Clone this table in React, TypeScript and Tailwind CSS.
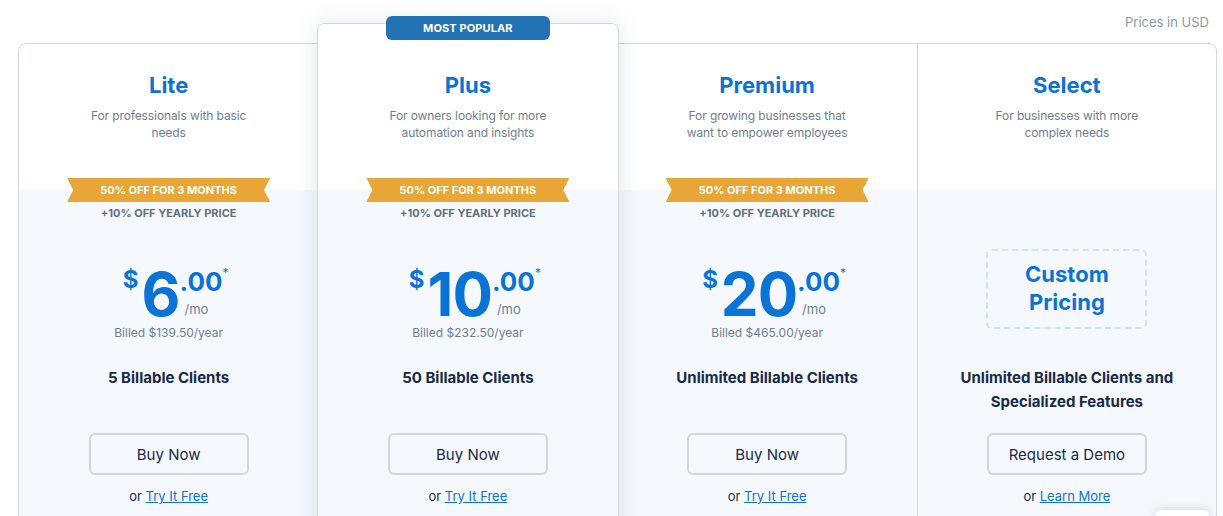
import React from "react";

type Plan = {
  name: string;
  desc: string[];
  price?: string;
  billed?: string;
  feature: string[];
  cta: string;
  link: string;
  featured?: boolean;
};

const plans: Plan[] = [
  {
    name: "Lite",
    desc: ["For professionals with basic", "needs"],
    price: "6",
    billed: "Billed $139.50/year",
    feature: ["5 Billable Clients"],
    cta: "Buy Now",
    link: "Try It Free",
  },
  {
    name: "Plus",
    desc: ["For owners looking for more", "automation and insights"],
    price: "10",
    billed: "Billed $232.50/year",
    feature: ["50 Billable Clients"],
    cta: "Buy Now",
    link: "Try It Free",
    featured: true,
  },
  {
    name: "Premium",
    desc: ["For growing businesses that", "want to empower employees"],
    price: "20",
    billed: "Billed $465.00/year",
    feature: ["Unlimited Billable Clients"],
    cta: "Buy Now",
    link: "Try It Free",
  },
  {
    name: "Select",
    desc: ["For businesses with more", "complex needs"],
    feature: ["Unlimited Billable Clients and", "Specialized Features"],
    cta: "Request a Demo",
    link: "Learn More",
  },
];

function Column({ plan, index }: { plan: Plan; index: number }) {
  const wrap = plan.featured
    ? "relative z-10 -mt-[21px] -mx-px bg-white border border-[#d3d8de] rounded-t-lg shadow-[0_0_24px_rgba(40,60,90,0.13)]"
    : index === 3
    ? "border-l border-[#d3d8de] rounded-tr-lg"
    : "rounded-tl-lg";
  return (
    <div className={wrap}>
      {plan.featured && (
        <div className="absolute -top-2 left-1/2 -translate-x-1/2 w-[164px] h-6 rounded-md bg-[#2372b4] flex items-center justify-center text-white text-[11px] font-bold tracking-[0.1px]">
          MOST POPULAR
        </div>
      )}
      <div
        className={
          "flex flex-col items-center bg-white " +
          (plan.featured ? "h-[166px] pt-[47px] rounded-t-lg" : "h-[146px] pt-[27px] rounded-t-lg")
        }
      >
        <div className="text-[22px] leading-[28px] font-bold text-[#0b73d5]">{plan.name}</div>
        <div className="mt-[8px] text-[12px] leading-[17px] tracking-[-0.1px] text-[#6e7e90] text-center">
          {plan.desc.map((d) => (
            <div key={d}>{d}</div>
          ))}
        </div>
      </div>
      <div className="bg-[#f5f9fd] flex flex-col items-center pb-12">
        {plan.price ? (
          <>
            <div className="-mt-3 w-[203px] h-6 bg-[#e8a636] [clip-path:polygon(0_0,100%_0,97%_50%,100%_100%,0_100%,3%_50%)] flex items-center justify-center text-white text-[11px] font-bold">
              50% OFF FOR 3 MONTHS
            </div>
            <div className="mt-1 text-[11px] leading-[14px] font-bold text-[#5f6f81]">
              +10% OFF YEARLY PRICE
            </div>
          </>
        ) : (
          <div className="-mt-3 h-[42px]" />
        )}
        <div className="h-[145px] flex flex-col items-center">
          {plan.price ? (
            <>
              <div className="mt-[48px] flex items-start pl-[14px] text-[#0b73d5] font-bold">
                <span className="text-[24px] leading-none mr-[3px]">$</span>
                <span className="text-[60px] leading-[52px] tracking-[-1px]">{plan.price}</span>
                <div className="flex flex-col">
                  <div className="mt-[1px] flex items-start">
                    <span className="text-[26px] leading-none">.00</span>
                    <span className="text-[12px] leading-none font-normal -mt-[2px]">*</span>
                  </div>
                  <span className="mt-[6px] pl-[5px] text-[13px] leading-4 font-normal text-[#6e7e90]">/mo</span>
                </div>
              </div>
              <div className="mt-[5px] text-[12px] leading-4 text-[#6e7e90]">{plan.billed}</div>
            </>
          ) : (
            <div className="mt-[29px] w-[161px] h-[80px] pb-[2px] border-2 border-dashed border-[#cfe3f4] rounded-md flex flex-col items-center justify-center text-[22px] leading-[28px] font-bold text-[#0b73d5]">
              <span>Custom</span>
              <span>Pricing</span>
            </div>
          )}
        </div>
        <div className="h-[68px] pt-px text-center text-[15px] leading-6 font-bold text-[#182a48]">
          {plan.feature.map((f) => (
            <div key={f}>{f}</div>
          ))}
        </div>
        <div className="w-[160px] h-[42px] pt-[3px] border-2 border-[#d2d7dc] rounded-md flex items-center justify-center text-[15px] text-[#182a48]">
          {plan.cta}
        </div>
        <div className="mt-[13px] text-[13px] leading-4 text-[#182a48]">
          or <span className="text-[#0b73d5] underline">{plan.link}</span>
        </div>
      </div>
    </div>
  );
}

export default function App() {
  return (
    <div className="relative min-h-[516px] bg-white overflow-hidden" style={{ fontFamily: "Inter, 'Noto Sans', sans-serif" }}>
      <div className="h-[44px] pt-[2px] flex items-center justify-end pr-[14px] text-[13px] text-[#8b98a6]">
        Prices in USD
      </div>
      <div className="-mt-px ml-[18px] w-[1199px] border border-[#d3d8de] rounded-lg grid grid-cols-4">
        {plans.map((p, i) => (
          <Column key={p.name} plan={p} index={i} />
        ))}
      </div>
      <div className="absolute left-[1155px] top-[510px] w-[54px] h-10 bg-white rounded-md shadow-[0_-2px_8px_rgba(0,0,0,0.12)]" />
    </div>
  );
}
